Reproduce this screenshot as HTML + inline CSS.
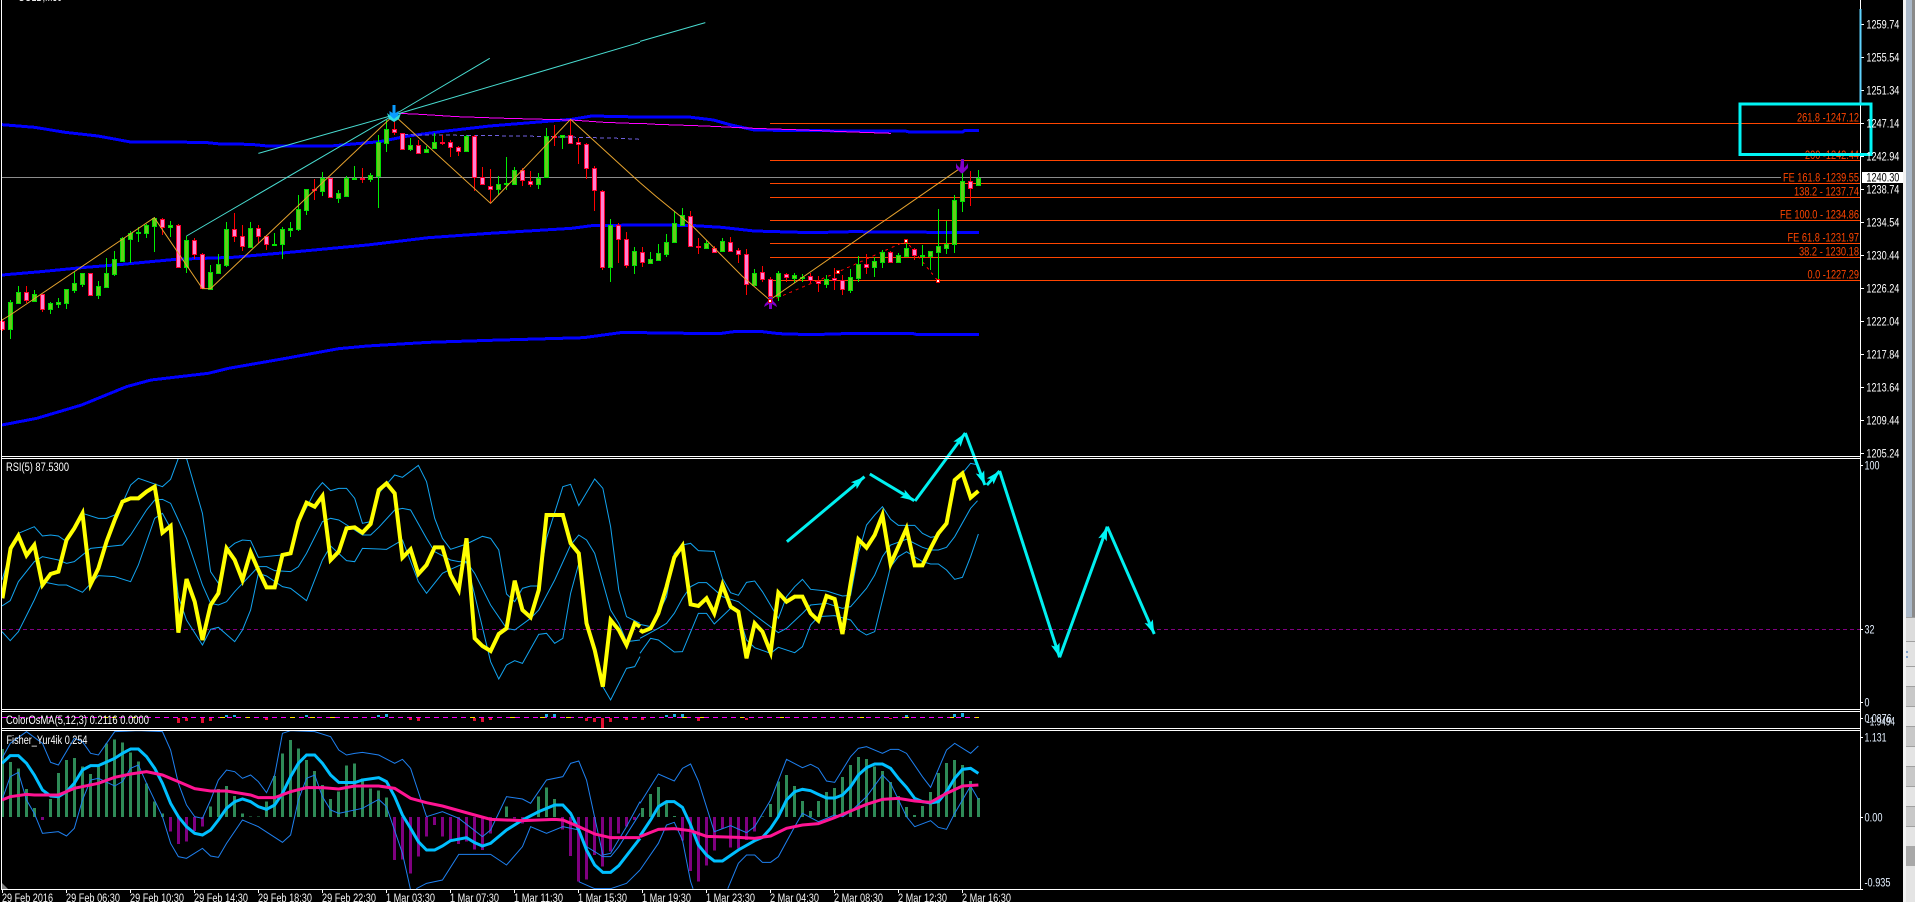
<!DOCTYPE html>
<html lang="en"><head><meta charset="utf-8"><title>GOLD chart</title>
<style>
html,body{margin:0;padding:0;background:#000;width:1915px;height:902px;overflow:hidden}
svg{display:block;position:absolute;left:0;top:0}
path{fill:none}
.n{vector-effect:non-scaling-stroke;fill:none}
text{font-family:"Liberation Sans",sans-serif;font-size:11.5px}
</style></head><body>
<svg width="1915" height="902" viewBox="0 0 1915 902" xmlns="http://www.w3.org/2000/svg">
<defs>
<marker id="a" markerWidth="15" markerHeight="11" refX="14" refY="5.5" orient="auto" markerUnits="userSpaceOnUse"><path d="M0 1L14 5.5L0 10L3 5.5z" style="fill:#00f5f5"/></marker>
<clipPath id="rsi"><rect x="2" y="459" width="1858" height="250"/></clipPath>
<clipPath id="fish"><rect x="2" y="731" width="1858" height="158"/></clipPath>
</defs>
<rect width="1915" height="902" fill="#000"/>

<!-- Top clipped title -->
<text x="18" y="1" fill="#fff" textLength="44" lengthAdjust="spacingAndGlyphs">GOLD,M30</text>

<!-- Fibo lines -->
<g stroke="#ff4500" shape-rendering="crispEdges">
<path d="M770 123.5H1860M770 160.5H1860M770 183.5H1860M770 197.5H1860M770 220.5H1860M770 243.5H1860M770 257.5H1860M770 280.5H1860"/>
</g>
<path d="M2 177.5H1781" stroke="#8c8c8c" shape-rendering="crispEdges"/>

<!-- Moving averages main -->
<g transform="scale(.40816 .33333)" shape-rendering="crispEdges" stroke="#0000ff">
<path class="n" stroke-width="3" d="M5 374L85 382L160 397L240 408L320 426L500 427L540 432L615 433L655 438L810 438L930 425L1000 408L1080 395L1200 378L1400 358L1450 348L1568 351"/>
<path class="n" stroke-width="3" d="M5 825L100 815L200 803L300 793L430 778L570 772L700 758L900 735L1050 713L1200 700L1400 685L1450 677L1568 675"/>
<path class="n" stroke-width="3" d="M5 1275L90 1255L200 1215L310 1160L370 1140L510 1120L560 1105L700 1075L830 1046L900 1038L1050 1027L1200 1021L1430 1013L1520 998L1568 998"/>
<path class="n" stroke="#ff00ff" d="M975 340L1030 343L1120 350L1240 355L1400 360L1480 367L1568 371"/>
<path class="n" stroke="#7060e0" stroke-dasharray="4 3" d="M990 404L1280 408L1520 415L1568 418"/>
</g>
<g transform="translate(640 0) scale(.40816 .33333)" shape-rendering="crispEdges" stroke="#0000ff">
<path class="n" stroke-width="3" d="M0 351L120 351L180 360L220 374L280 390L400 392L650 393L660 396L790 396L795 392L830 392"/>
<path class="n" stroke-width="3" d="M0 675L120 676L200 682L280 693L420 698L520 695L830 698"/>
<path class="n" stroke-width="3" d="M0 998L120 1000L200 1000L230 995L300 995L340 1001L420 1004L500 1001L670 1001L680 1004L830 1004"/>
<path class="n" stroke="#ff00ff" d="M0 370L40 373L160 378L280 385L400 390L520 396L615 400"/>
</g>

<!-- Red dashed zigzag -->
<path d="M770 301L838 272L906 241L938 281" stroke="#ff0000" stroke-dasharray="3 4" shape-rendering="crispEdges"/>

<!-- Candles: wicks -->
<g shape-rendering="crispEdges">
<path stroke="#00ee00" d="M10.5 300V339M18.5 286V303M34.5 290V302M50.5 302V314M58.5 298V308M66.5 289V309M74.5 272V293M82.5 273V287M98.5 281V299M106.5 258V287M114.5 251V276M122.5 237V261M130.5 231V263M138.5 227V242M146.5 224V238M154.5 217V252M170.5 221V237M186.5 236V273M210.5 265V290M218.5 254V274M226.5 222V267M250.5 222V248M274.5 233V246M282.5 227V259M290.5 222V237M298.5 195V231M306.5 189V215M322.5 172V196M338.5 190V203M346.5 176V197M354.5 166V179M370.5 173V182M378.5 135V208M386.5 120V152M410.5 138V151M426.5 146V153M434.5 133V149M466.5 135V152M498.5 176V195M506.5 157V190M514.5 167V184M538.5 173V189M546.5 128V177M562.5 135V149M610.5 219V282M634.5 247V274M650.5 252V264M658.5 244V261M666.5 234V257M674.5 211V243M682.5 208V225M706.5 240V249M722.5 238V252M754.5 269V286M778.5 271V301M794.5 273V283M802.5 274V282M826.5 275V288M850.5 269V293M858.5 256V282M874.5 257V277M882.5 250V268M898.5 253V263M906.5 240V257M922.5 245V266M930.5 251V270M938.5 209V282M946.5 221V254M954.5 195V253M962.5 168V212M978.5 170V185"/>
<path stroke="#ff0000" d="M2.5 319V331M26.5 286V303M42.5 294V312M90.5 273V295M162.5 218V235M178.5 224V268M194.5 238V259M202.5 253V289M234.5 213V242M242.5 225V251M258.5 225V243M266.5 235V250M314.5 179V200M330.5 178V198M362.5 168V183M394.5 115V135M402.5 133V150M418.5 140V153M442.5 135V145M450.5 140V157M458.5 146V156M474.5 135V191M482.5 167V185M490.5 169V203M522.5 168V186M530.5 171V187M554.5 125V146M570.5 119V143M578.5 138V164M586.5 143V179M594.5 166V211M602.5 190V270M618.5 223V263M626.5 232V268M642.5 247V267M690.5 211V246M698.5 238V254M714.5 246V252M730.5 237V252M738.5 248V263M746.5 249V295M762.5 266V282M770.5 277V304M786.5 273V282M810.5 273V283M818.5 276V292M834.5 268V290M842.5 275V295M866.5 254V274M890.5 251V263M914.5 248V260M970.5 171V206"/>
<!-- Candles: bodies -->
<path stroke="#00e000" style="fill:#66cc1a" d="M8.5 302.5h4v27h-4zM16.5 292.5h4v11h-4zM32.5 294.5h4v7h-4zM48.5 303.5h4v6h-4zM56.5 302.5h4v2h-4zM64.5 289.5h4v14h-4zM72.5 283.5h4v7h-4zM80.5 273.5h4v11h-4zM96.5 286.5h4v9h-4zM104.5 273.5h4v14h-4zM112.5 259.5h4v15h-4zM120.5 238.5h4v23h-4zM128.5 233.5h4v6h-4zM136.5 232.5h4v1h-4zM144.5 225.5h4v8h-4zM152.5 218.5h4v8h-4zM168.5 225.5h4v2h-4zM184.5 240.5h4v27h-4zM208.5 272.5h4v17h-4zM216.5 264.5h4v9h-4zM224.5 229.5h4v36h-4zM248.5 228.5h4v19h-4zM272.5 244.5h4v1h-4zM280.5 229.5h4v15h-4zM288.5 228.5h4v2h-4zM296.5 209.5h4v20h-4zM304.5 189.5h4v21h-4zM320.5 178.5h4v13h-4zM336.5 193.5h4v5h-4zM344.5 178.5h4v18h-4zM352.5 178.5h4v1h-4zM368.5 175.5h4v4h-4zM376.5 142.5h4v34h-4zM384.5 129.5h4v14h-4zM408.5 145.5h4v4h-4zM424.5 149.5h4v3h-4zM432.5 142.5h4v6h-4zM464.5 136.5h4v15h-4zM496.5 184.5h4v5h-4zM504.5 183.5h4v1h-4zM512.5 170.5h4v14h-4zM536.5 178.5h4v6h-4zM544.5 136.5h4v41h-4zM560.5 135.5h4v2h-4zM608.5 225.5h4v42h-4zM632.5 251.5h4v14h-4zM648.5 259.5h4v4h-4zM656.5 253.5h4v7h-4zM664.5 242.5h4v12h-4zM672.5 223.5h4v19h-4zM680.5 215.5h4v10h-4zM704.5 243.5h4v5h-4zM720.5 241.5h4v10h-4zM752.5 273.5h4v12h-4zM776.5 273.5h4v23h-4zM792.5 275.5h4v3h-4zM800.5 277.5h4v1h-4zM824.5 279.5h4v5h-4zM848.5 277.5h4v13h-4zM856.5 264.5h4v14h-4zM872.5 261.5h4v6h-4zM880.5 252.5h4v10h-4zM896.5 255.5h4v7h-4zM904.5 248.5h4v8h-4zM920.5 255.5h4v1h-4zM928.5 251.5h4v5h-4zM936.5 246.5h4v6h-4zM944.5 244.5h4v4h-4zM952.5 200.5h4v44h-4zM960.5 181.5h4v20h-4zM976.5 178.5h4v7h-4z"/>
<path stroke="#ff0030" style="fill:#ff80d0" d="M.5 321.5h4v8h-4zM24.5 292.5h4v8h-4zM40.5 294.5h4v15h-4zM88.5 273.5h4v22h-4zM160.5 219.5h4v8h-4zM176.5 225.5h4v42h-4zM192.5 240.5h4v14h-4zM200.5 254.5h4v34h-4zM232.5 229.5h4v7h-4zM240.5 236.5h4v10h-4zM256.5 228.5h4v8h-4zM264.5 236.5h4v8h-4zM312.5 189.5h4v1h-4zM328.5 178.5h4v19h-4zM360.5 178.5h4v1h-4zM392.5 129.5h4v3h-4zM400.5 133.5h4v16h-4zM416.5 145.5h4v8h-4zM440.5 142.5h4v1h-4zM448.5 142.5h4v5h-4zM456.5 147.5h4v4h-4zM472.5 136.5h4v41h-4zM480.5 177.5h4v7h-4zM488.5 186.5h4v3h-4zM520.5 170.5h4v10h-4zM528.5 181.5h4v3h-4zM552.5 136.5h4v1h-4zM568.5 135.5h4v8h-4zM576.5 142.5h4v2h-4zM584.5 144.5h4v24h-4zM592.5 168.5h4v22h-4zM600.5 191.5h4v76h-4zM616.5 225.5h4v14h-4zM624.5 239.5h4v26h-4zM640.5 252.5h4v10h-4zM688.5 216.5h4v30h-4zM696.5 246.5h4v1h-4zM712.5 248.5h4v4h-4zM728.5 242.5h4v9h-4zM736.5 250.5h4v4h-4zM744.5 254.5h4v30h-4zM760.5 272.5h4v7h-4zM768.5 279.5h4v17h-4zM784.5 274.5h4v3h-4zM808.5 276.5h4v4h-4zM816.5 281.5h4v2h-4zM832.5 278.5h4v2h-4zM840.5 280.5h4v9h-4zM864.5 264.5h4v3h-4zM888.5 252.5h4v10h-4zM912.5 249.5h4v6h-4zM968.5 181.5h4v7h-4z"/>
</g>

<!-- Orange zigzag + cyan fans -->
<g transform="scale(.40816 .33333)">
<path class="n" stroke="#e6a32e" d="M5 960L25 945L378 653L496 866L516 866L965 345L1202 610L1398 358L1568 548"/>
<path class="n" stroke="#48dcd0" d="M633 460L965 345L1568 127"/>
<path class="n" stroke="#48dcd0" d="M457 708L965 345L1200 175"/>
</g>
<g transform="translate(640 0) scale(.40816 .33333)">
<path class="n" stroke="#e6a32e" d="M0 548L40 590L130 680L250 828L318 900L790 500"/>
<path class="n" stroke="#48dcd0" d="M0 124L160 68"/>
</g>

<!-- Arrows -->
<path d="M392.5 105h3v8l3-2v4l-3 3-1.500 1.500-1.500-1.500-3-3v-4l3 2z" style="fill:#0a9cff"/>
<path d="M387 113l7 6 7-6-2 6-5 3-5-3z" style="fill:#30e0e0"/>
<path d="M961 159h3v9l3-3 1-2v5l-5 5-1 .5-1-.5-5-5v-5l1 2 3 3z" style="fill:#8000c8"/>
<path d="M769 297l-1 4-3 3-1 3 5-3v5h3v-5l5 3-1-3-3-3-1-4z" style="fill:#8000c8"/>
<g style="fill:#fff" stroke="#f00000" stroke-width="1" shape-rendering="crispEdges">
<rect x="768.500" y="299.500" width="3" height="3"/><rect x="836.500" y="270.500" width="3" height="3"/><rect x="904.500" y="239.500" width="3" height="3"/><rect x="936.500" y="279.500" width="3" height="3"/>
</g>

<!-- Fibo labels -->
<g fill="#ff4500" text-anchor="end">
<text x="1859" y="121.700" textLength="62" lengthAdjust="spacingAndGlyphs">261.8 -1247.12</text>
<text x="1859" y="159" textLength="54" lengthAdjust="spacingAndGlyphs">200 -1242.44</text>
<text x="1859" y="181.700" textLength="76" lengthAdjust="spacingAndGlyphs">FE 161.8 -1239.55</text>
<text x="1859" y="195.700" textLength="65" lengthAdjust="spacingAndGlyphs">138.2 - 1237.74</text>
<text x="1859" y="218.700" textLength="79" lengthAdjust="spacingAndGlyphs">FE 100.0 - 1234.86</text>
<text x="1859" y="241.700" textLength="71.500" lengthAdjust="spacingAndGlyphs">FE 61.8 -1231.97</text>
<text x="1859" y="255.700" textLength="60" lengthAdjust="spacingAndGlyphs">38.2 - 1230.18</text>
<text x="1859" y="278.700" textLength="51.500" lengthAdjust="spacingAndGlyphs">0.0 -1227.29</text>
</g>

<!-- RSI panel -->
<path d="M2 629.500H1860" stroke="#800080" stroke-dasharray="4 3" shape-rendering="crispEdges"/>
<g clip-path="url(#rsi)">
<g transform="translate(0 450) scale(.40816 .33333)" stroke="#12a4f0">
<path class="n" d="M5 390L25 310L45 250L84 230L104 258L124 255L143 258L163 275L202 190L241 205L261 205L281 195L300 160L320 105L339 85L398 110L418 88L437 25L457 25L477 110L496 190L516 365L535 400L555 300L575 280L594 270L614 272L633 322L690 315L712 312L731 220L771 125L790 98L810 122L830 115L849 115L869 145L888 220L908 215L928 130L967 75L986 82L1025 46L1045 95L1065 205L1084 265L1104 298L1143 282L1163 270L1182 259L1202 265L1222 300L1241 432L1261 455L1280 415L1300 408L1320 408L1339 265L1379 110L1398 103L1418 167L1457 87L1477 115L1496 230L1516 420L1535 500L1568 520"/>
<path class="n" d="M5 468L25 452L45 395L84 335L104 320L143 330L163 340L182 335L222 295L300 285L320 255L359 180L379 150L398 148L418 160L437 210L457 265L496 405L516 460L535 465L555 455L575 425L633 350L653 350L673 362L712 365L731 350L751 310L790 215L810 205L830 210L869 240L888 255L908 255L928 232L967 180L986 175L1006 180L1045 265L1065 305L1104 330L1124 335L1143 335L1163 370L1202 465L1241 535L1261 540L1300 505L1320 480L1359 390L1398 285L1418 255L1437 270L1457 310L1496 480L1516 520L1535 575L1568 570"/>
<path class="n" d="M5 545L25 572L45 545L84 450L104 395L143 405L163 405L202 427L241 377L281 380L320 395L339 345L379 205L398 190L418 235L437 440L457 510L496 585L516 538L535 532L575 575L594 540L614 480L633 370L653 378L692 410L712 415L751 452L790 330L810 288L849 332L869 335L888 295L947 298L986 270L1025 395L1045 430L1084 370L1104 358L1143 337L1163 435L1202 635L1222 687L1241 645L1261 632L1280 640L1320 553L1339 550L1359 580L1379 565L1398 430L1418 340L1437 530L1457 600L1477 710L1496 750L1535 655L1555 650L1568 620"/>
</g>
<g transform="translate(640 450) scale(.40816 .33333)" stroke="#12a4f0">
<path class="n" d="M0 523L26 530L45 490L65 440L84 310L104 285L124 280L143 302L182 304L202 385L222 428L241 436L261 397L281 393L300 425L339 505L359 440L379 410L398 388L418 418L457 423L496 438L516 436L535 310L555 225L575 195L594 170L614 208L633 226L673 226L692 250L712 262L731 258L751 220L771 90L790 70L810 40L829 45"/>
<path class="n" d="M0 565L45 535L65 520L84 490L104 445L124 410L143 398L163 398L202 440L241 455L281 495L339 548L359 535L398 490L418 465L457 460L496 475L516 470L555 415L575 375L594 320L614 285L653 268L692 292L712 300L731 300L751 292L771 260L810 175L827 152"/>
<path class="n" d="M0 610L26 565L45 570L84 606L104 605L143 490L163 490L182 522L222 475L241 490L261 570L281 593L320 610L339 592L379 608L398 590L418 525L437 500L477 497L516 510L535 540L555 555L575 545L594 450L614 350L633 320L653 305L692 335L712 342L731 342L751 360L771 388L790 382L810 320L829 252"/>
</g>
<g transform="translate(0 450) scale(.40816 .33333)">
<path class="n" stroke="#ffff00" stroke-width="4" d="M6 445L26 295L45 257L65 316L84 285L104 405L124 372L143 365L163 270L182 235L202 190L222 403L241 355L261 275L281 210L300 155L320 145L339 145L359 125L379 110L398 248L418 228L437 548L457 387L477 455L496 570L516 465L535 430L555 295L575 330L594 390L614 307L633 360L653 412L673 412L692 315L712 310L731 215L751 158L771 170L790 138L810 330L830 305L849 235L869 232L888 248L908 222L928 120L947 100L967 130L986 323L1006 298L1025 372L1045 345L1065 292L1084 292L1104 375L1124 420L1143 265L1163 565L1182 588L1202 603L1222 552L1241 535L1261 392L1280 480L1300 502L1320 420L1339 195L1359 195L1379 195L1398 280L1418 310L1437 520L1457 600L1477 710L1496 510L1516 540L1535 585L1555 520L1568 530"/>
</g>
<g transform="translate(640 450) scale(.40816 .33333)">
<path class="n" stroke="#ffff00" stroke-width="4" d="M0 540L6 545L26 535L45 490L65 410L84 322L104 287L124 463L143 468L163 445L182 490L202 405L222 470L241 485L261 625L281 520L300 545L320 607L339 428L359 455L379 440L398 440L418 490L437 512L457 438L477 447L496 552L516 400L535 268L555 293L575 255L594 195L614 342L633 290L653 235L673 346L692 346L712 295L731 250L751 220L771 90L790 70L810 143L829 123"/>
</g>
</g>

<!-- Hand drawn cyan arrows -->
<g stroke="#00f0f0" stroke-width="3" fill="none">
<path d="M786.900 541.700L864.500 476.700" marker-end="url(#a)"/>
<path d="M869.800 474L914.300 500.700" marker-end="url(#a)"/>
<path d="M915 501L965.300 433" marker-end="url(#a)"/>
<path d="M965.300 433L984.900 485" marker-end="url(#a)"/>
<path d="M986.900 485L999.600 471" marker-end="url(#a)"/>
<path d="M999.600 471L1059.600 657.300" marker-end="url(#a)"/>
<path d="M1059.600 657.300L1107.300 526.700" marker-end="url(#a)"/>
<path d="M1107.300 526.700L1154.300 634" marker-end="url(#a)"/>
</g>

<!-- OsMA panel -->
<g shape-rendering="crispEdges">
<path d="M2 717.500H980" stroke="#ff00ff" stroke-dasharray="5 4"/>
<path d="M104 717.500h4M112 717.500h4M132 717.500h4M220 717.500h5M246 717.500h4M290 717.500h5M310 717.500h5M330 717.500h5M470 717.500h5M510 717.500h5M540 717.500h5M566 717.500h5M682 717.500h5M700 717.500h4M740 717.500h4M780 717.500h4M860 717.500h4M905 717.500h4M950 717.500h4M975 717.500h4" stroke="#ffe000"/>
<path stroke="#e01030" stroke-width="3" d="M178.500 718V723M186.500 718V721M202.500 718V723M210.500 718V721M266.500 718V720M410.500 718V720M418.500 718V721M474.500 718V721M482.500 718V722M490.500 718V720M586.500 718V721M594.500 718V722M602.500 718V728M610.500 718V722M626.500 718V720M698.500 718V721M746.500 718V720M642.500 718V720M890.500 718V719"/>
<path stroke="#1ab0e0" stroke-width="3" d="M226.500 715V717M234.500 715V717M306.500 715V717M378.500 715V717M386.500 714V717M546.500 714V717M554.500 714V717M666.500 715V717M674.500 714V717M682.500 714V717M906.500 715V717M954.500 714V717M962.500 713V717"/>
</g>

<!-- Fisher panel -->
<g clip-path="url(#fish)">
<g transform="translate(0 700) scale(1 .33333)" shape-rendering="crispEdges">
<path class="n" stroke="#2e8b57" stroke-width="3" d="M2.500 351V147M10.500 351V186M18.500 351V205M26.500 351V267M34.500 351V324M50.500 351V297M58.500 351V219M66.500 351V180M74.500 351V174M82.500 351V200M90.500 351V222M98.500 351V200M106.500 351V130M114.500 351V118M122.500 351V128M130.500 351V158M138.500 351V185M146.500 351V250M154.500 351V305M162.500 351V340M210.500 351V320M218.500 351V267M226.500 351V258M234.500 351V288M242.500 351V340M250.500 351V349M258.500 351V349M266.500 351V305M274.500 351V228M282.500 351V160M290.500 351V120M298.500 351V145M306.500 351V180M314.500 351V213M322.500 351V255M330.500 351V297M338.500 351V275M346.500 351V197M354.500 351V190M362.500 351V235M370.500 351V265M378.500 351V272M386.500 351V293M506.500 351V320M538.500 351V290M546.500 351V262M554.500 351V297M530.500 351V345M642.500 351V324M650.500 351V282M658.500 351V261M666.500 351V305M674.500 351V348M762.500 351V349M770.500 351V312M778.500 351V245M786.500 351V225M794.500 351V258M802.500 351V303M810.500 351V333M818.500 351V303M826.500 351V276M834.500 351V264M842.500 351V231M850.500 351V195M858.500 351V171M866.500 351V177M874.500 351V200M882.500 351V213M890.500 351V246M898.500 351V288M906.500 351V321M914.500 351V345M922.500 351V318M930.500 351V276M938.500 351V219M946.500 351V189M954.500 351V180M962.500 351V195M970.500 351V243M978.500 351V294"/>
<path class="n" stroke="#800080" stroke-width="3" d="M42.500 351V360M170.500 351V395M178.500 351V432M186.500 351V425M194.500 351V393M202.500 351V380M394.500 351V480M402.500 351V478M410.500 351V520M418.500 351V470M426.500 351V410M434.500 351V375M442.500 351V410M450.500 351V425M458.500 351V432M466.500 351V425M474.500 351V448M482.500 351V450M490.500 351V400M514.500 351V355M522.500 351V370M562.500 351V388M570.500 351V468M578.500 351V545M586.500 351V538M594.500 351V465M602.500 351V500M610.500 351V455M618.500 351V400M626.500 351V380M634.500 351V360M682.500 351V422M690.500 351V513M698.500 351V545M706.500 351V497M714.500 351V452M722.500 351V385M730.500 351V443M738.500 351V445M746.500 351V420M754.500 351V395"/>
</g>
<g transform="translate(0 700) scale(.40816 .33333)" stroke="#1e80f0">
<path class="n" d="M5 175L25 130L65 95L104 130L124 187L143 195L182 115L202 125L222 160L241 165L261 130L281 95L339 92L398 95L418 150L437 250L457 315L477 350L496 355L516 300L535 240L555 210L575 215L594 235L614 225L633 245L653 278L673 225L692 100L712 92L771 95L810 110L830 150L849 165L869 160L888 157L928 165L967 190L986 178L1006 205L1045 350L1084 335L1124 355L1182 410L1202 390L1241 290L1280 297L1300 310L1339 240L1379 230L1398 190L1418 183L1437 240L1477 465L1496 460L1535 380L1568 305"/>
<path class="n" d="M5 300L25 230L45 217L65 300L84 340L104 400L143 395L163 408L182 385L202 300L222 240L241 235L281 258L300 245L320 205L339 195L359 250L398 350L418 430L437 470L457 475L496 445L516 468L535 472L555 430L594 360L633 380L692 427L712 405L731 300L751 235L771 225L790 290L810 330L830 340L888 325L928 298L947 320L986 460L1006 570"/>
<path class="n" d="M1020 566L1045 550L1084 540L1124 463L1202 463L1241 495L1280 440L1300 380L1339 400L1379 380L1418 390L1437 440L1477 470L1496 470L1516 440L1568 340"/>
<path class="n" d="M1418 545L1457 566L1496 566L1535 550L1568 510"/>
</g>
<g transform="translate(640 700) scale(.40816 .33333)" stroke="#1e80f0">
<path class="n" d="M0 310L45 222L84 243L104 205L124 192L143 243L182 395L222 377L261 398L281 380L320 300L359 178L398 203L418 193L437 205L457 243L477 247L516 170L535 145L555 140L594 160L614 148L633 148L653 160L692 230L712 262L751 150L771 130L810 160L829 138"/>
<path class="n" d="M0 510L45 430L65 375L84 367L104 420L124 545L130 566"/>
<path class="n" d="M215 566L241 490L261 465L281 465L300 487L320 487L339 470L379 380L398 340L437 365L477 345L496 350L516 335L555 290L594 225L614 250L653 350L673 380L712 362L731 382L751 388L771 340L810 258L829 298"/>
</g>
<g transform="translate(0 700) scale(.40816 .33333)">
<path class="n" stroke="#00bfff" stroke-width="3" d="M5 190L25 167L45 167L65 190L84 225L104 270L124 288L143 290L163 275L182 250L202 210L222 197L241 197L281 175L300 160L320 147L339 147L359 170L379 205L398 250L418 310L437 350L457 380L477 400L496 405L516 390L535 360L555 325L575 305L594 297L614 305L633 320L653 328L673 315L692 280L712 230L731 190L751 165L771 165L790 190L810 225L830 247L869 248L888 240L928 233L947 245L967 290L986 345L1006 385L1025 425L1045 450L1065 450L1084 438L1104 422L1143 413L1163 428L1182 438L1202 430L1241 390L1280 360L1320 335L1359 315L1379 315L1398 340L1418 390L1437 450L1457 495L1477 517L1496 517L1516 497L1568 415"/>
<path class="n" stroke="#ff1493" stroke-width="3" d="M5 300L25 290L65 283L84 285L143 285L182 265L241 250L281 232L320 222L359 215L398 225L437 245L477 266L516 273L555 273L614 285L633 293L673 293L712 275L751 263L790 263L830 267L869 258L928 258L967 265L1006 295L1045 308L1084 318L1163 345L1202 358L1280 362L1359 358L1379 360L1418 380L1457 402L1496 413L1568 413"/>
</g>
<g transform="translate(640 700) scale(.40816 .33333)">
<path class="n" stroke="#00bfff" stroke-width="3" d="M0 408L26 360L45 320L65 305L84 305L104 322L124 375L143 435L163 465L182 483L202 483L241 450L281 422L300 412L320 385L339 350L359 300L379 275L398 268L418 272L437 283L457 294L477 294L496 285L516 260L535 225L555 203L575 192L594 192L614 205L633 235L653 262L673 295L692 305L712 309L731 305L751 275L771 235L790 208L810 205L829 220"/>
<path class="n" stroke="#ff1493" stroke-width="3" d="M0 410L45 388L84 386L124 392L163 409L241 412L281 415L320 408L359 385L398 375L437 371L477 353L516 333L555 313L594 298L633 295L673 303L712 307L751 280L790 258L829 255"/>
</g>
</g>

<!-- Panel labels -->
<g fill="#fff">
<text x="6" y="471" textLength="63" lengthAdjust="spacingAndGlyphs">RSI(5) 87.5300</text>
<text x="6" y="724" textLength="143" lengthAdjust="spacingAndGlyphs">ColorOsMA(5,12,3) 0.2116 0.0000</text>
<text x="6.500" y="744" textLength="81" lengthAdjust="spacingAndGlyphs">Fisher_Yur4ik 0.254</text>
</g>

<!-- Frame -->
<g stroke="#fff" shape-rendering="crispEdges" fill="none">
<path d="M1.500 0V889.500H1861"/>
<path d="M1860.500 0V889.500"/>
<path d="M2 456.500H1861M2 458.500H1861M2 709.500H1861M2 711.500H1861M2 728.500H1861M2 730.500H1861"/>
<path d="M1861 24.500h3M1861 57.500h3M1861 90.500h3M1861 123.500h3M1861 156.500h3M1861 189.500h3M1861 222.500h3M1861 255.500h3M1861 288.500h3M1861 321.500h3M1861 354.500h3M1861 387.500h3M1861 420.500h3M1861 453.500h3"/>
<path d="M1861 465.500h2M1861 629.500h2M1861 702.500h2M1861 718.500h2M1861 737.500h2M1861 817.500h2M1861 889.500h2"/>
<path d="M2.500 889v4M66.500 889v4M130.500 889v4M194.500 889v4M258.500 889v4M322.500 889v4M386.500 889v4M450.500 889v4M514.500 889v4M578.500 889v4M642.500 889v4M706.500 889v4M770.500 889v4M834.500 889v4M898.500 889v4M962.500 889v4"/>
</g>
<path d="M2 883L8 889H2z" style="fill:#808080"/>

<!-- Cyan rectangle and vertical line -->
<path d="M1860.500 9V104" stroke="#60d4ff" stroke-width="2" shape-rendering="crispEdges"/>
<rect x="1740" y="104" width="131" height="50.500" stroke="#00f5f5" stroke-width="3" fill="none" shape-rendering="crispEdges"/>

<!-- Price axis labels -->
<g fill="#fff">
<text x="1866.400" y="28.300" textLength="33" lengthAdjust="spacingAndGlyphs">1259.74</text>
<text x="1866.400" y="61.300" textLength="33" lengthAdjust="spacingAndGlyphs">1255.54</text>
<text x="1866.400" y="94.300" textLength="33" lengthAdjust="spacingAndGlyphs">1251.34</text>
<text x="1866.400" y="127.300" textLength="33" lengthAdjust="spacingAndGlyphs">1247.14</text>
<text x="1866.400" y="160.300" textLength="33" lengthAdjust="spacingAndGlyphs">1242.94</text>
<text x="1866.400" y="193.300" textLength="33" lengthAdjust="spacingAndGlyphs">1238.74</text>
<text x="1866.400" y="226.300" textLength="33" lengthAdjust="spacingAndGlyphs">1234.54</text>
<text x="1866.400" y="259.300" textLength="33" lengthAdjust="spacingAndGlyphs">1230.44</text>
<text x="1866.400" y="292.300" textLength="33" lengthAdjust="spacingAndGlyphs">1226.24</text>
<text x="1866.400" y="325.300" textLength="33" lengthAdjust="spacingAndGlyphs">1222.04</text>
<text x="1866.400" y="358.300" textLength="33" lengthAdjust="spacingAndGlyphs">1217.84</text>
<text x="1866.400" y="391.300" textLength="33" lengthAdjust="spacingAndGlyphs">1213.64</text>
<text x="1866.400" y="424.300" textLength="33" lengthAdjust="spacingAndGlyphs">1209.44</text>
<text x="1866.400" y="457.300" textLength="33" lengthAdjust="spacingAndGlyphs">1205.24</text>
</g>
<rect x="1862" y="172" width="41" height="11" fill="#fff"/>
<text x="1866.400" y="181.500" fill="#000" textLength="33" lengthAdjust="spacingAndGlyphs">1240.30</text>
<g fill="#e4f0ff">
<text x="1864.500" y="469.700" textLength="15" lengthAdjust="spacingAndGlyphs">100</text>
<text x="1864.500" y="633.300" textLength="10" lengthAdjust="spacingAndGlyphs">32</text>
<text x="1864.500" y="706.700" textLength="5" lengthAdjust="spacingAndGlyphs">0</text>
<text x="1864.500" y="722.700" textLength="27" lengthAdjust="spacingAndGlyphs">0.0876</text>
<text x="1867" y="725.700" textLength="28" lengthAdjust="spacingAndGlyphs">-1.9494</text>
<text x="1864.500" y="741.700" textLength="22" lengthAdjust="spacingAndGlyphs">1.131</text>
<text x="1864.500" y="821.700" textLength="18" lengthAdjust="spacingAndGlyphs">0.00</text>
<text x="1864.500" y="886.700" textLength="26" lengthAdjust="spacingAndGlyphs">-0.935</text>
</g>

<!-- Time axis -->
<g fill="#f4f4f4">
<text x="2" y="902" textLength="51" lengthAdjust="spacingAndGlyphs">29 Feb 2016</text>
<text x="66" y="902" textLength="54" lengthAdjust="spacingAndGlyphs">29 Feb 06:30</text>
<text x="130" y="902" textLength="54" lengthAdjust="spacingAndGlyphs">29 Feb 10:30</text>
<text x="194" y="902" textLength="54" lengthAdjust="spacingAndGlyphs">29 Feb 14:30</text>
<text x="258" y="902" textLength="54" lengthAdjust="spacingAndGlyphs">29 Feb 18:30</text>
<text x="322" y="902" textLength="54" lengthAdjust="spacingAndGlyphs">29 Feb 22:30</text>
<text x="386" y="902" textLength="49" lengthAdjust="spacingAndGlyphs">1 Mar 03:30</text>
<text x="450" y="902" textLength="49" lengthAdjust="spacingAndGlyphs">1 Mar 07:30</text>
<text x="514" y="902" textLength="49" lengthAdjust="spacingAndGlyphs">1 Mar 11:30</text>
<text x="578" y="902" textLength="49" lengthAdjust="spacingAndGlyphs">1 Mar 15:30</text>
<text x="642" y="902" textLength="49" lengthAdjust="spacingAndGlyphs">1 Mar 19:30</text>
<text x="706" y="902" textLength="49" lengthAdjust="spacingAndGlyphs">1 Mar 23:30</text>
<text x="770" y="902" textLength="49" lengthAdjust="spacingAndGlyphs">2 Mar 04:30</text>
<text x="834" y="902" textLength="49" lengthAdjust="spacingAndGlyphs">2 Mar 08:30</text>
<text x="898" y="902" textLength="49" lengthAdjust="spacingAndGlyphs">2 Mar 12:30</text>
<text x="962" y="902" textLength="49" lengthAdjust="spacingAndGlyphs">2 Mar 16:30</text>
</g>

<!-- Right window strip -->
<rect x="1903" y="0" width="12" height="902" fill="#f2f2f2"/>
<rect x="1906" y="0" width="6" height="617" fill="#aab8c8"/>
<rect x="1912" y="0" width="3" height="617" fill="#8a8a8a"/>
<rect x="1906" y="617" width="9" height="24" fill="#dcdcdc"/>
<rect x="1906" y="641" width="9" height="25" fill="#e2e2e2"/>
<rect x="1906" y="666" width="9" height="20" fill="#e4e4e4"/>
<rect x="1906" y="686" width="9" height="20" fill="#c8c8c8"/>
<rect x="1906" y="706" width="9" height="20" fill="#e4e4e4"/>
<rect x="1906" y="726" width="9" height="20" fill="#c8c8c8"/>
<rect x="1906" y="746" width="9" height="20" fill="#e4e4e4"/>
<rect x="1906" y="766" width="9" height="20" fill="#c8c8c8"/>
<rect x="1906" y="786" width="9" height="20" fill="#e4e4e4"/>
<rect x="1906" y="806" width="9" height="20" fill="#c8c8c8"/>
<rect x="1906" y="826" width="9" height="20" fill="#e4e4e4"/>
<rect x="1906" y="846" width="9" height="20" fill="#a8a8a8"/>
<rect x="1906" y="866" width="9" height="36" fill="#e4e4e4"/>
<path d="M1906 641.500h9M1906 666.500h9M1906 686.500h9M1906 706.500h9M1906 726.500h9M1906 746.500h9M1906 766.500h9M1906 786.500h9M1906 806.500h9M1906 826.500h9M1906 617.500h9" stroke="#a0a0a0" shape-rendering="crispEdges"/>
<path d="M1906 652h2M1906 657h2" stroke="#2060b0" shape-rendering="crispEdges"/>
</svg>
</body></html>
